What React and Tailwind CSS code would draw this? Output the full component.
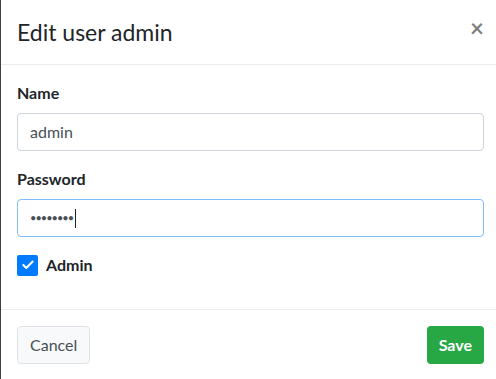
import { Check } from 'lucide-react';

const font = { fontFamily: 'Lato, "Noto Sans", sans-serif' };

const Field = ({ label, children }) => (
    <div className="mb-4">
        <label className="block font-bold text-base leading-6 text-[#212529] mb-2">{label}</label>
        {children}
    </div>
);

const App = () => {
    return (
        <div className="flex w-[496px] h-[379px] overflow-hidden bg-white" style={font}>
            {/* backdrop edge */}
            <div className="w-px shrink-0 bg-[#3f3f3f]" />

            <div className="flex-1 flex flex-col">
                {/* Header */}
                <div className="flex items-start justify-between h-[65px] pl-4 pr-[12px] pt-4 border-b border-[#e9ecef]">
                    <h5 className="text-[23px] leading-8 text-[#212529]">Edit user admin</h5>
                    <button className="text-[24px] leading-5 font-bold text-black/50 pt-[2px]">×</button>
                </div>

                {/* Body */}
                <div className="pl-4 pr-[12px] pt-4 pb-4 border-b border-[#e9ecef]">
                    <Field label="Name">
                        <div className="h-[38px] flex items-center px-3 border border-[#ced4da] rounded text-base text-[#495057]">
                            admin
                        </div>
                    </Field>
                    <Field label="Password">
                        <div className="h-[38px] flex items-center px-3 border border-[#80bdff] rounded text-[11px] tracking-[-1px] text-[#495057]">
                            <span>••••••••</span>
                            <span className="ml-[2px] w-px h-[19px] bg-[#212529]" />
                        </div>
                    </Field>
                    <div className="flex items-center gap-2 h-6 mb-4">
                        <span className="w-[21px] h-[21px] rounded-[2px] bg-[#007bff] flex items-center justify-center">
                            <Check size={14} strokeWidth={3.5} className="text-white" />
                        </span>
                        <span className="font-bold text-base text-[#212529]">Admin</span>
                    </div>
                </div>

                {/* Footer */}
                <div className="flex items-center justify-between pl-4 pr-[12px] pt-4">
                    <button className="h-[38px] px-3 rounded bg-[#f8f9fa] border border-[#dee2e6] text-base text-[#495057]">
                        Cancel
                    </button>
                    <button className="h-[38px] px-3 rounded bg-[#28a745] text-base font-bold text-white">
                        Save
                    </button>
                </div>
            </div>
        </div>
    );
};

export default App;
